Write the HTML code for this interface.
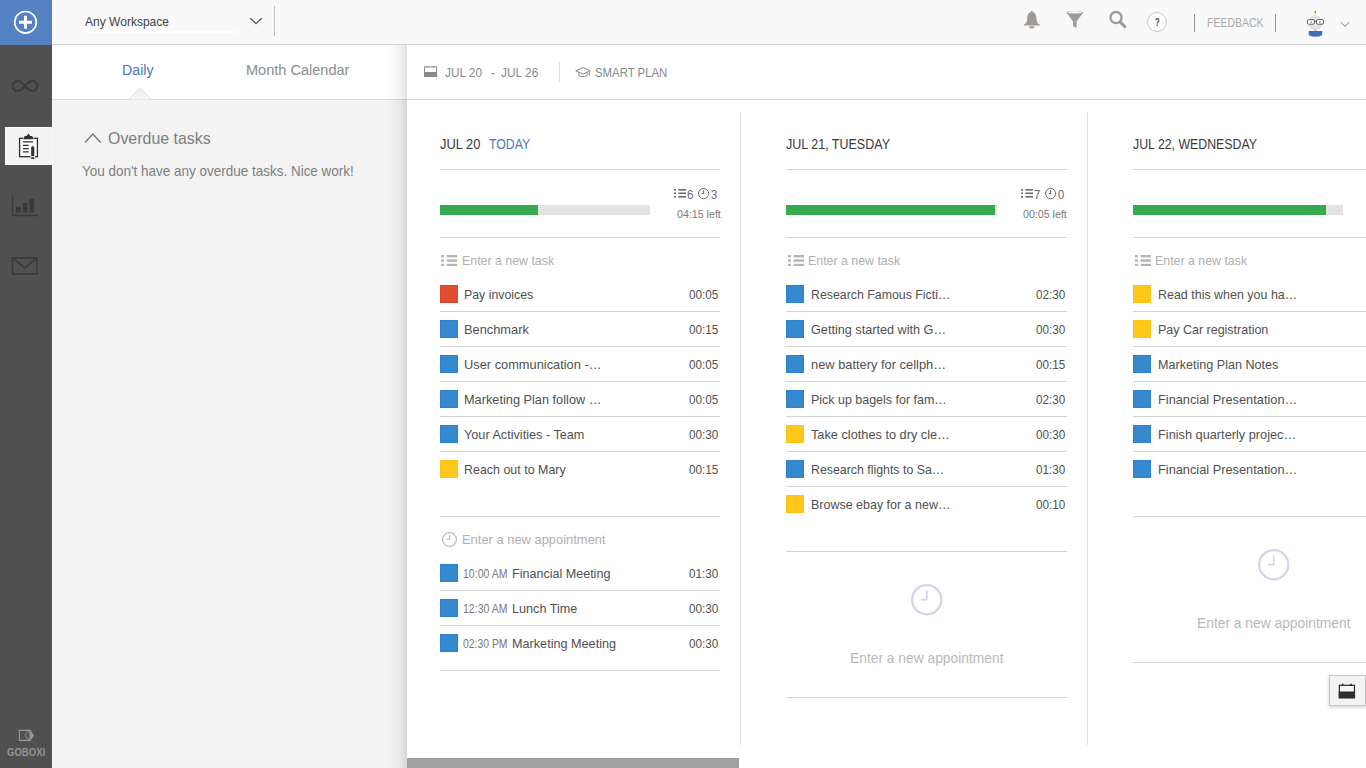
<!DOCTYPE html>
<html lang="en"><head><meta charset="utf-8"><title>Goboxi - Daily</title>
<style>
html,body{margin:0;padding:0}
body{width:1366px;height:768px;overflow:hidden;position:relative;background:#f3f3f3;font-family:"Liberation Sans",sans-serif}
.r{position:absolute;display:block}
.t{position:absolute;display:inline-block;white-space:nowrap;line-height:1;transform-origin:0 0}
</style></head>
<body>
<div class="r" style="left:0px;top:0px;width:1366px;height:768px;background:#f3f3f3;"></div>
<div class="r" style="left:52px;top:45px;width:355px;height:54px;background:#fff;"></div>
<div class="r" style="left:52px;top:99px;width:355px;height:1px;background:#dcdcdc;"></div>
<div class="r" style="left:384px;top:45px;width:23px;height:723px;background:linear-gradient(to right,rgba(0,0,0,0),rgba(0,0,0,.012) 30%,rgba(0,0,0,.04) 60%,rgba(0,0,0,.075) 82%,rgba(0,0,0,.125) 100%);"></div>
<div class="r" style="left:407px;top:45px;width:959px;height:723px;background:#fff;"></div>
<div class="r" style="left:407px;top:99px;width:959px;height:1px;background:#d8d8d8;"></div>
<div class="r" style="left:0px;top:0px;width:1366px;height:44px;background:#f9f9f9;"></div>
<div class="r" style="left:0px;top:44px;width:1366px;height:1px;background:#d2d2d2;"></div>
<div class="r" style="left:0px;top:0px;width:52px;height:45px;background:#5580c2;"></div>
<div class="r" style="left:0px;top:45px;width:52px;height:723px;background:#505050;"></div>
<div class="r" style="left:5px;top:127px;width:47px;height:38px;background:#f3f3f3;box-sizing:border-box;border:1px solid #fcfcfc;border-right:0;"></div>
<svg class="r" style="left:13px;top:10px" width="25" height="25" viewBox="0 0 25 25"><circle cx="12.5" cy="12.3" r="10.800" fill="none" stroke="#fff" stroke-width="1.600"/><path d="M12.5 5.8v13M6 12.3h13" stroke="#fff" stroke-width="3" fill="none"/></svg>
<span class="t " style="left:85.00px;top:15px;font-size:13.5px;color:#444;transform:scaleX(0.8908);">Any Workspace</span>
<div class="r" style="left:85px;top:30.5px;width:152px;height:2.3px;background:#fff;"></div>
<svg class="r" style="left:248px;top:15px" width="16" height="12" viewBox="0 0 16 12"><path d="M2.3 3.2L8 8.7L13.7 3.2" fill="none" stroke="#555" stroke-width="1.3"/></svg>
<div class="r" style="left:274px;top:6px;width:1px;height:30px;background:#bdbdbd;"></div>
<svg class="r" style="left:1022px;top:9px" width="20" height="21" viewBox="0 0 20 21"><circle cx="9.800" cy="2.900" r="1.100" fill="#9e9a98"/><path d="M9.800 3.100C6.600 3.100 5.400 5.900 5.200 9.200C5 12.500 4.400 14.300 1.900 15.600V16.500H17.700V15.600C15.200 14.300 14.600 12.500 14.400 9.200C14.200 5.900 13 3.100 9.800 3.100z" fill="#9e9a98"/><path d="M7.100 17.200h5.400a2.700 2.400 0 0 1-5.400 0z" fill="#9e9a98"/></svg>
<svg class="r" style="left:1065px;top:9px" width="20" height="21" viewBox="0 0 20 21"><path d="M1.500 3.600C1.500 1.500 18.200 1.500 18.200 3.600L11.600 12.600V18.700L8.100 17.200V12.600z" fill="#9e9a98"/><ellipse cx="9.850" cy="3.300" rx="7.300" ry="1.250" fill="#f6f6f6"/></svg>
<svg class="r" style="left:1106px;top:9px" width="22" height="21" viewBox="0 0 22 21"><circle cx="10" cy="8.600" r="5.600" fill="none" stroke="#9e9a98" stroke-width="2.300"/><path d="M14.300 13.100l4.500 4.500" stroke="#9e9a98" stroke-width="3" stroke-linecap="round"/></svg>
<div class="r" style="left:1147px;top:12px;width:18px;height:18px;border:1px solid #c8c8c8;border-radius:50%;background:#fff"></div>
<span class="t " style="left:1154.60px;top:17px;font-size:11px;color:#444;transform:scaleX(0.6855);font-weight:bold;">?</span>
<div class="r" style="left:1194px;top:14px;width:1px;height:18px;background:#999;"></div>
<span class="t " style="left:1207.00px;top:16px;font-size:13px;color:#aaa;transform:scaleX(0.8063);">FEEDBACK</span>
<div class="r" style="left:1275px;top:14px;width:1px;height:18px;background:#999;"></div>
<svg class="r" style="left:1304px;top:10px" width="24" height="28" viewBox="0 0 24 28">
<rect x="10.600" y=".9" width="1.400" height="2.400" rx=".6" fill="#e4483c"/>
<path d="M10.500 3.300h1.600l1.600 2.700H9.400z" fill="#f3efc4"/>
<ellipse cx="11.300" cy="12.700" rx="7.300" ry="7.100" fill="#e7e7e7"/>
<path d="M4.800 16q6.500 2.400 13 0M5.600 18q5.700 2 11.400 0M6 7.800q5.300-1.500 10.600 0" fill="none" stroke="#dcdcdc" stroke-width=".8"/>
<rect x="3.400" y="9.600" width="7" height="4.600" rx="1.300" fill="#fff" stroke="#5a5a5a" stroke-width="1"/>
<rect x="12.500" y="9.600" width="7" height="4.600" rx="1.300" fill="#fff" stroke="#5a5a5a" stroke-width="1"/>
<path d="M10.400 11.300h2.100" stroke="#5a5a5a" stroke-width="1"/>
<circle cx="7.200" cy="12.100" r=".8" fill="#777"/><circle cx="15.800" cy="12.100" r=".8" fill="#777"/>
<rect x="9.900" y="19.600" width="2.900" height="1.700" fill="#c4c4c4"/>
<path d="M4.700 21.100h13.500v4.200q-6.700 3-13.500 0z" fill="#3f74c4"/>
<path d="M5.300 21.600l6.100 3.300 6.100-3.300" fill="none" stroke="#3566ae" stroke-width=".7"/>
</svg>
<svg class="r" style="left:1339px;top:19.500px" width="12" height="9" viewBox="0 0 12 9"><path d="M1.800 2.200L6 6.300L10.200 2.200" fill="none" stroke="#777" stroke-width="1"/></svg>
<svg class="r" style="left:8.500px;top:78px" width="32" height="16" viewBox="0 0 32 16"><path d="M16 8c-2.600-3.200-4.500-5-7.300-5a5 5 0 0 0 0 10c2.800 0 4.700-1.800 7.300-5s4.500-5 7.300-5a5 5 0 0 1 0 10c-2.800 0-4.700-1.800-7.300-5z" fill="none" stroke="#393939" stroke-width="2"/></svg>
<svg class="r" style="left:17px;top:132px" width="23" height="28" viewBox="0 0 23 28">
<rect x="2.600" y="6.300" width="17.800" height="18.400" fill="#fff" stroke="#2f2f2f" stroke-width="1.300"/>
<path d="M6.200 7.200L7.600 4.100h1.900l1.900-2.500l1.900 2.500h1.900l1.400 3.100z" fill="#2f2f2f" stroke="#fff" stroke-width=".9" paint-order="stroke"/>
<path d="M6 9.900h10M6 13.400h5.700M6 16.600h5.700M6 19.900h5.700" stroke="#2f2f2f" stroke-width="1.300"/>
<rect x="13.500" y="12.600" width="4.500" height="13" fill="#fff"/>
<path d="M14.200 15l1.550-2.100l1.550 2.100z" fill="#8a8a8a"/>
<rect x="14.200" y="15" width="3.100" height="9.200" fill="#2f2f2f"/>
<rect x="14.200" y="25.300" width="3.100" height="1.700" fill="#2f2f2f"/>
</svg>
<svg class="r" style="left:11px;top:195px" width="28" height="22" viewBox="0 0 28 22"><path d="M1.500 .5v20h25.500" fill="none" stroke="#393939" stroke-width="1.400"/><rect x="5" y="11.500" width="4.600" height="6" fill="#393939"/><rect x="11.800" y="8" width="4.600" height="9.500" fill="#393939"/><rect x="18.600" y="4" width="4.600" height="13.500" fill="#393939"/></svg>
<svg class="r" style="left:11px;top:256px" width="28" height="20" viewBox="0 0 28 20"><rect x="1.500" y="1.800" width="24.500" height="16.200" fill="none" stroke="#393939" stroke-width="1.600"/><path d="M2 2.300l11.800 9.500L25.500 2.300" fill="none" stroke="#393939" stroke-width="1.600"/></svg>
<svg class="r" style="left:18px;top:729px" width="17" height="13" viewBox="0 0 17 13"><path d="M1.400 1.400h10.600v10H1.400z" fill="none" stroke="#999" stroke-width="1.100"/><path d="M12 1.400L6.700 6.400 12 11.400" fill="none" stroke="#999" stroke-width="1"/><path d="M12.300 1L16.100 6.400L12.300 11.800z" fill="#999"/></svg>
<div class="r" style="left:52px;top:100px;width:1px;height:668px;background:#fafafa;"></div>
<span class="t " style="left:6.80px;top:748px;font-size:10px;color:#939393;transform:scaleX(0.9550);font-weight:bold;">GOBOXI</span>
<span class="t " style="left:122.00px;top:62px;font-size:15.5px;color:#4a78ba;transform:scaleX(0.9163);">Daily</span>
<span class="t " style="left:245.60px;top:62px;font-size:15.5px;color:#8c8c8c;transform:scaleX(0.9376);">Month Calendar</span>
<svg class="r" style="left:126px;top:86px" width="28" height="14" viewBox="0 0 28 14"><path d="M2.500 13.500L14 2.300L25.500 13.500z" fill="#f3f3f3"/><path d="M2.500 13.500L14 2.300L25.500 13.500" fill="none" stroke="#dcdcdc" stroke-width="1"/></svg>
<svg class="r" style="left:83px;top:131px" width="20" height="14" viewBox="0 0 20 14"><path d="M2 11.500L9.800 3L17.600 11.500" fill="none" stroke="#777" stroke-width="1.400"/></svg>
<span class="t " style="left:107.60px;top:130px;font-size:16.5px;color:#7e7e7e;transform:scaleX(0.9657);">Overdue tasks</span>
<span class="t " style="left:82.40px;top:164px;font-size:14.5px;color:#7e7e7e;transform:scaleX(0.9296);">You don&#x27;t have any overdue tasks. Nice work!</span>
<svg class="r" style="left:423px;top:65px" width="16" height="13" viewBox="0 0 16 13"><rect x="1.500" y="1.900" width="12.100" height="9.500" fill="#fff" stroke="#8a8a8a" stroke-width="1"/><rect x="1" y="7" width="13.100" height="4.900" fill="#8a8a8a"/><rect x="3.400" y=".9" width="1.300" height="1.800" fill="#8a8a8a"/><rect x="10.300" y=".9" width="1.300" height="1.800" fill="#8a8a8a"/></svg>
<span class="t " style="left:445.30px;top:66px;font-size:13.5px;color:#888;transform:scaleX(0.8756);">JUL 20</span>
<span class="t " style="left:491.40px;top:66px;font-size:13.5px;color:#888;transform:scaleX(0.7960);">-</span>
<span class="t " style="left:501.20px;top:66px;font-size:13.5px;color:#888;transform:scaleX(0.8827);">JUL 26</span>
<div class="r" style="left:559px;top:62px;width:1px;height:20px;background:#ddd;"></div>
<svg class="r" style="left:574px;top:66px" width="18" height="13" viewBox="0 0 18 13"><path d="M1.800 4.800L9 1.500l7.200 3.300L9 8.100z" fill="none" stroke="#888" stroke-width="1"/><path d="M4.800 6.500v3c1.400 1.500 7 1.500 8.400 0v-3" fill="none" stroke="#888" stroke-width="1"/><path d="M15.300 5.200v4.600" stroke="#888" stroke-width="1"/></svg>
<span class="t " style="left:594.50px;top:66px;font-size:13.5px;color:#888;transform:scaleX(0.8427);">SMART PLAN</span>
<span class="t " style="left:440.00px;top:136px;font-size:15.5px;color:#3a3a3a;transform:scaleX(0.8307);">JUL 20</span>
<span class="t " style="left:488.70px;top:136px;font-size:15.5px;color:#4a78ba;transform:scaleX(0.7942);">TODAY</span>
<div class="r" style="left:440px;top:169px;width:280px;height:1px;background:#d4d4d4;"></div>
<div class="r" style="left:440px;top:205px;width:210px;height:10px;background:#e3e3e3;"></div>
<div class="r" style="left:440px;top:205px;width:98px;height:10px;background:#35aa4e;"></div>
<div class="r" style="left:440px;top:237px;width:280px;height:1px;background:#d4d4d4;"></div>
<svg class="r" style="left:673.80px;top:189.40px" width="12" height="8.6" viewBox="0 0 12 8.6"><rect x="0" y="0.00" width="2" height="1.6" fill="#6a6a6a"/><rect x="4.4" y="0.00" width="7.60" height="1.6" fill="#6a6a6a"/><rect x="0" y="3.50" width="2" height="1.6" fill="#6a6a6a"/><rect x="4.4" y="3.50" width="7.60" height="1.6" fill="#6a6a6a"/><rect x="0" y="7.00" width="2" height="1.6" fill="#6a6a6a"/><rect x="4.4" y="7.00" width="7.60" height="1.6" fill="#6a6a6a"/></svg>
<span class="t " style="left:687.30px;top:189px;font-size:12.5px;color:#6a6a6a;transform:scaleX(0.9225);">6</span>
<svg class="r" style="left:696.80px;top:187.40px" width="13.20" height="13.20" viewBox="0 0 13.20 13.20"><circle cx="6.60" cy="6.60" r="5.10" fill="none" stroke="#6a6a6a" stroke-width="1"/><path d="M6.60 3.24V7.10M7.10 6.60H4.58" fill="none" stroke="#6a6a6a" stroke-width="1"/></svg>
<span class="t " style="left:711.00px;top:189px;font-size:12.5px;color:#6a6a6a;transform:scaleX(0.8937);">3</span>
<span class="t " style="left:677.00px;top:209px;font-size:11.5px;color:#7a7a7a;transform:scaleX(0.9256);">04:15 left</span>
<svg class="r" style="left:441.20px;top:255.00px" width="16" height="11.2" viewBox="0 0 16 11.2"><rect x="0" y="0.00" width="2.9" height="2.4" fill="#b4b4b4"/><rect x="5.7" y="0.00" width="10.30" height="2.4" fill="#b4b4b4"/><rect x="0" y="4.40" width="2.9" height="2.4" fill="#b4b4b4"/><rect x="5.7" y="4.40" width="10.30" height="2.4" fill="#b4b4b4"/><rect x="0" y="8.80" width="2.9" height="2.4" fill="#b4b4b4"/><rect x="5.7" y="8.80" width="10.30" height="2.4" fill="#b4b4b4"/></svg>
<span class="t " style="left:461.50px;top:254px;font-size:13.5px;color:#b0b0b0;transform:scaleX(0.9161);">Enter a new task</span>
<div class="r" style="left:440px;top:285px;width:16px;height:16px;background:#e04e33;border:1px solid #dc4529"></div>
<span class="t " style="left:464.20px;top:288px;font-size:13.5px;color:#505050;transform:scaleX(0.9142);">Pay invoices</span>
<span class="t " style="left:688.80px;top:288px;font-size:13.5px;color:#505050;transform:scaleX(0.8664);">00:05</span>
<div class="r" style="left:440px;top:311px;width:280px;height:1px;background:#d4d4d4;"></div>
<div class="r" style="left:440px;top:320px;width:16px;height:16px;background:#3789cf;border:1px solid #2f81cc"></div>
<span class="t " style="left:464.20px;top:323px;font-size:13.5px;color:#505050;transform:scaleX(0.9491);">Benchmark</span>
<span class="t " style="left:688.80px;top:323px;font-size:13.5px;color:#505050;transform:scaleX(0.8664);">00:15</span>
<div class="r" style="left:440px;top:346px;width:280px;height:1px;background:#d4d4d4;"></div>
<div class="r" style="left:440px;top:355px;width:16px;height:16px;background:#3789cf;border:1px solid #2f81cc"></div>
<span class="t " style="left:464.20px;top:358px;font-size:13.5px;color:#505050;transform:scaleX(0.9497);">User communication -…</span>
<span class="t " style="left:688.80px;top:358px;font-size:13.5px;color:#505050;transform:scaleX(0.8664);">00:05</span>
<div class="r" style="left:440px;top:381px;width:280px;height:1px;background:#d4d4d4;"></div>
<div class="r" style="left:440px;top:390px;width:16px;height:16px;background:#3789cf;border:1px solid #2f81cc"></div>
<span class="t " style="left:464.20px;top:393px;font-size:13.5px;color:#505050;transform:scaleX(0.9444);">Marketing Plan follow …</span>
<span class="t " style="left:688.80px;top:393px;font-size:13.5px;color:#505050;transform:scaleX(0.8664);">00:05</span>
<div class="r" style="left:440px;top:416px;width:280px;height:1px;background:#d4d4d4;"></div>
<div class="r" style="left:440px;top:425px;width:16px;height:16px;background:#3789cf;border:1px solid #2f81cc"></div>
<span class="t " style="left:464.20px;top:428px;font-size:13.5px;color:#505050;transform:scaleX(0.9383);">Your Activities - Team</span>
<span class="t " style="left:688.80px;top:428px;font-size:13.5px;color:#505050;transform:scaleX(0.8664);">00:30</span>
<div class="r" style="left:440px;top:451px;width:280px;height:1px;background:#d4d4d4;"></div>
<div class="r" style="left:440px;top:460px;width:16px;height:16px;background:#fdc81a;border:1px solid #fdc30e"></div>
<span class="t " style="left:464.20px;top:463px;font-size:13.5px;color:#505050;transform:scaleX(0.9221);">Reach out to Mary</span>
<span class="t " style="left:688.80px;top:463px;font-size:13.5px;color:#505050;transform:scaleX(0.8664);">00:15</span>
<div class="r" style="left:440px;top:516px;width:280px;height:1px;background:#d4d4d4;"></div>
<svg class="r" style="left:440.70px;top:530.90px" width="17.00" height="17.00" viewBox="0 0 17.00 17.00"><circle cx="8.50" cy="8.50" r="6.90" fill="none" stroke="#bdb9b9" stroke-width="1.2"/><path d="M8.50 4.00V9.10M9.10 8.50H5.80" fill="none" stroke="#bdb9b9" stroke-width="1.2"/></svg>
<span class="t " style="left:461.70px;top:533px;font-size:13.5px;color:#b0b0b0;transform:scaleX(0.9566);">Enter a new appointment</span>
<div class="r" style="left:440px;top:564px;width:16px;height:16px;background:#3789cf;border:1px solid #2f81cc"></div>
<span class="t " style="left:463.10px;top:567px;font-size:13px;color:#787878;transform:scaleX(0.8102);">10:00 AM</span>
<span class="t " style="left:511.50px;top:567px;font-size:13.5px;color:#505050;transform:scaleX(0.9297);">Financial Meeting</span>
<span class="t " style="left:688.80px;top:567px;font-size:13.5px;color:#505050;transform:scaleX(0.8664);">01:30</span>
<div class="r" style="left:440px;top:590px;width:280px;height:1px;background:#d4d4d4;"></div>
<div class="r" style="left:440px;top:599px;width:16px;height:16px;background:#3789cf;border:1px solid #2f81cc"></div>
<span class="t " style="left:463.10px;top:602px;font-size:13px;color:#787878;transform:scaleX(0.8102);">12:30 AM</span>
<span class="t " style="left:511.50px;top:602px;font-size:13.5px;color:#505050;transform:scaleX(0.9370);">Lunch Time</span>
<span class="t " style="left:688.80px;top:602px;font-size:13.5px;color:#505050;transform:scaleX(0.8664);">00:30</span>
<div class="r" style="left:440px;top:625px;width:280px;height:1px;background:#d4d4d4;"></div>
<div class="r" style="left:440px;top:634px;width:16px;height:16px;background:#3789cf;border:1px solid #2f81cc"></div>
<span class="t " style="left:463.10px;top:637px;font-size:13px;color:#787878;transform:scaleX(0.7998);">02:30 PM</span>
<span class="t " style="left:511.50px;top:637px;font-size:13.5px;color:#505050;transform:scaleX(0.9366);">Marketing Meeting</span>
<span class="t " style="left:688.80px;top:637px;font-size:13.5px;color:#505050;transform:scaleX(0.8664);">00:30</span>
<div class="r" style="left:440px;top:670px;width:280px;height:1px;background:#d4d4d4;"></div>
<span class="t " style="left:786.00px;top:136px;font-size:15.5px;color:#3a3a3a;transform:scaleX(0.8065);">JUL 21, TUESDAY</span>
<div class="r" style="left:786px;top:169px;width:281px;height:1px;background:#d4d4d4;"></div>
<div class="r" style="left:786px;top:205px;width:211px;height:10px;background:#e3e3e3;"></div>
<div class="r" style="left:786px;top:205px;width:209px;height:10px;background:#35aa4e;"></div>
<div class="r" style="left:786px;top:237px;width:281px;height:1px;background:#d4d4d4;"></div>
<svg class="r" style="left:1020.60px;top:189.40px" width="12" height="8.6" viewBox="0 0 12 8.6"><rect x="0" y="0.00" width="2" height="1.6" fill="#6a6a6a"/><rect x="4.4" y="0.00" width="7.60" height="1.6" fill="#6a6a6a"/><rect x="0" y="3.50" width="2" height="1.6" fill="#6a6a6a"/><rect x="4.4" y="3.50" width="7.60" height="1.6" fill="#6a6a6a"/><rect x="0" y="7.00" width="2" height="1.6" fill="#6a6a6a"/><rect x="4.4" y="7.00" width="7.60" height="1.6" fill="#6a6a6a"/></svg>
<span class="t " style="left:1034.10px;top:189px;font-size:12.5px;color:#6a6a6a;transform:scaleX(0.9225);">7</span>
<svg class="r" style="left:1043.60px;top:187.40px" width="13.20" height="13.20" viewBox="0 0 13.20 13.20"><circle cx="6.60" cy="6.60" r="5.10" fill="none" stroke="#6a6a6a" stroke-width="1"/><path d="M6.60 3.24V7.10M7.10 6.60H4.58" fill="none" stroke="#6a6a6a" stroke-width="1"/></svg>
<span class="t " style="left:1057.80px;top:189px;font-size:12.5px;color:#6a6a6a;transform:scaleX(0.8937);">0</span>
<span class="t " style="left:1023.40px;top:209px;font-size:11.5px;color:#7a7a7a;transform:scaleX(0.9256);">00:05 left</span>
<svg class="r" style="left:788.00px;top:255.00px" width="16" height="11.2" viewBox="0 0 16 11.2"><rect x="0" y="0.00" width="2.9" height="2.4" fill="#b4b4b4"/><rect x="5.7" y="0.00" width="10.30" height="2.4" fill="#b4b4b4"/><rect x="0" y="4.40" width="2.9" height="2.4" fill="#b4b4b4"/><rect x="5.7" y="4.40" width="10.30" height="2.4" fill="#b4b4b4"/><rect x="0" y="8.80" width="2.9" height="2.4" fill="#b4b4b4"/><rect x="5.7" y="8.80" width="10.30" height="2.4" fill="#b4b4b4"/></svg>
<span class="t " style="left:808.30px;top:254px;font-size:13.5px;color:#b0b0b0;transform:scaleX(0.9161);">Enter a new task</span>
<div class="r" style="left:786px;top:285px;width:16px;height:16px;background:#3789cf;border:1px solid #2f81cc"></div>
<span class="t " style="left:811.24px;top:288px;font-size:13.5px;color:#505050;transform:scaleX(0.9145);">Research Famous Ficti…</span>
<span class="t " style="left:1035.60px;top:288px;font-size:13.5px;color:#505050;transform:scaleX(0.8664);">02:30</span>
<div class="r" style="left:786px;top:311px;width:281px;height:1px;background:#d4d4d4;"></div>
<div class="r" style="left:786px;top:320px;width:16px;height:16px;background:#3789cf;border:1px solid #2f81cc"></div>
<span class="t " style="left:811.24px;top:323px;font-size:13.5px;color:#505050;transform:scaleX(0.9376);">Getting started with G…</span>
<span class="t " style="left:1035.60px;top:323px;font-size:13.5px;color:#505050;transform:scaleX(0.8664);">00:30</span>
<div class="r" style="left:786px;top:346px;width:281px;height:1px;background:#d4d4d4;"></div>
<div class="r" style="left:786px;top:355px;width:16px;height:16px;background:#3789cf;border:1px solid #2f81cc"></div>
<span class="t " style="left:811.24px;top:358px;font-size:13.5px;color:#505050;transform:scaleX(0.9524);">new battery for cellph…</span>
<span class="t " style="left:1035.60px;top:358px;font-size:13.5px;color:#505050;transform:scaleX(0.8664);">00:15</span>
<div class="r" style="left:786px;top:381px;width:281px;height:1px;background:#d4d4d4;"></div>
<div class="r" style="left:786px;top:390px;width:16px;height:16px;background:#3789cf;border:1px solid #2f81cc"></div>
<span class="t " style="left:811.24px;top:393px;font-size:13.5px;color:#505050;transform:scaleX(0.9230);">Pick up bagels for fam…</span>
<span class="t " style="left:1035.60px;top:393px;font-size:13.5px;color:#505050;transform:scaleX(0.8664);">02:30</span>
<div class="r" style="left:786px;top:416px;width:281px;height:1px;background:#d4d4d4;"></div>
<div class="r" style="left:786px;top:425px;width:16px;height:16px;background:#fdc81a;border:1px solid #fdc30e"></div>
<span class="t " style="left:811.24px;top:428px;font-size:13.5px;color:#505050;transform:scaleX(0.9441);">Take clothes to dry cle…</span>
<span class="t " style="left:1035.60px;top:428px;font-size:13.5px;color:#505050;transform:scaleX(0.8664);">00:30</span>
<div class="r" style="left:786px;top:451px;width:281px;height:1px;background:#d4d4d4;"></div>
<div class="r" style="left:786px;top:460px;width:16px;height:16px;background:#3789cf;border:1px solid #2f81cc"></div>
<span class="t " style="left:811.24px;top:463px;font-size:13.5px;color:#505050;transform:scaleX(0.9146);">Research flights to Sa…</span>
<span class="t " style="left:1035.60px;top:463px;font-size:13.5px;color:#505050;transform:scaleX(0.8664);">01:30</span>
<div class="r" style="left:786px;top:486px;width:281px;height:1px;background:#d4d4d4;"></div>
<div class="r" style="left:786px;top:495px;width:16px;height:16px;background:#fdc81a;border:1px solid #fdc30e"></div>
<span class="t " style="left:811.24px;top:498px;font-size:13.5px;color:#505050;transform:scaleX(0.9242);">Browse ebay for a new…</span>
<span class="t " style="left:1035.60px;top:498px;font-size:13.5px;color:#505050;transform:scaleX(0.8664);">00:10</span>
<div class="r" style="left:786px;top:551px;width:281px;height:1px;background:#d4d4d4;"></div>
<svg class="r" style="left:909.80px;top:582.80px" width="33.40" height="33.40" viewBox="0 0 33.40 33.40"><circle cx="16.70" cy="16.70" r="14.60" fill="none" stroke="#ddd0e6" stroke-width="2.2"/><path d="M16.70 7.28V17.55M17.55 16.70H11.05" fill="none" stroke="#ddd0e6" stroke-width="1.7"/></svg>
<span class="t " style="left:850.30px;top:651px;font-size:14.5px;color:#b8b8b8;transform:scaleX(0.9520);">Enter a new appointment</span>
<div class="r" style="left:786px;top:697px;width:281px;height:1px;background:#d4d4d4;"></div>
<span class="t " style="left:1133.00px;top:136px;font-size:15.5px;color:#3a3a3a;transform:scaleX(0.7952);">JUL 22, WEDNESDAY</span>
<div class="r" style="left:1133px;top:169px;width:240px;height:1px;background:#d4d4d4;"></div>
<div class="r" style="left:1133px;top:205px;width:210px;height:10px;background:#e3e3e3;"></div>
<div class="r" style="left:1133px;top:205px;width:193px;height:10px;background:#35aa4e;"></div>
<div class="r" style="left:1133px;top:237px;width:240px;height:1px;background:#d4d4d4;"></div>
<svg class="r" style="left:1134.60px;top:255.00px" width="16" height="11.2" viewBox="0 0 16 11.2"><rect x="0" y="0.00" width="2.9" height="2.4" fill="#b4b4b4"/><rect x="5.7" y="0.00" width="10.30" height="2.4" fill="#b4b4b4"/><rect x="0" y="4.40" width="2.9" height="2.4" fill="#b4b4b4"/><rect x="5.7" y="4.40" width="10.30" height="2.4" fill="#b4b4b4"/><rect x="0" y="8.80" width="2.9" height="2.4" fill="#b4b4b4"/><rect x="5.7" y="8.80" width="10.30" height="2.4" fill="#b4b4b4"/></svg>
<span class="t " style="left:1154.90px;top:254px;font-size:13.5px;color:#b0b0b0;transform:scaleX(0.9161);">Enter a new task</span>
<div class="r" style="left:1133px;top:285px;width:16px;height:16px;background:#fdc81a;border:1px solid #fdc30e"></div>
<span class="t " style="left:1157.72px;top:288px;font-size:13.5px;color:#505050;transform:scaleX(0.9232);">Read this when you ha…</span>
<div class="r" style="left:1133px;top:311px;width:240px;height:1px;background:#d4d4d4;"></div>
<div class="r" style="left:1133px;top:320px;width:16px;height:16px;background:#fdc81a;border:1px solid #fdc30e"></div>
<span class="t " style="left:1157.72px;top:323px;font-size:13.5px;color:#505050;transform:scaleX(0.9246);">Pay Car registration</span>
<div class="r" style="left:1133px;top:346px;width:240px;height:1px;background:#d4d4d4;"></div>
<div class="r" style="left:1133px;top:355px;width:16px;height:16px;background:#3789cf;border:1px solid #2f81cc"></div>
<span class="t " style="left:1157.72px;top:358px;font-size:13.5px;color:#505050;transform:scaleX(0.9320);">Marketing Plan Notes</span>
<div class="r" style="left:1133px;top:381px;width:240px;height:1px;background:#d4d4d4;"></div>
<div class="r" style="left:1133px;top:390px;width:16px;height:16px;background:#3789cf;border:1px solid #2f81cc"></div>
<span class="t " style="left:1157.72px;top:393px;font-size:13.5px;color:#505050;transform:scaleX(0.9470);">Financial Presentation…</span>
<div class="r" style="left:1133px;top:416px;width:240px;height:1px;background:#d4d4d4;"></div>
<div class="r" style="left:1133px;top:425px;width:16px;height:16px;background:#3789cf;border:1px solid #2f81cc"></div>
<span class="t " style="left:1157.72px;top:428px;font-size:13.5px;color:#505050;transform:scaleX(0.9449);">Finish quarterly projec…</span>
<div class="r" style="left:1133px;top:451px;width:240px;height:1px;background:#d4d4d4;"></div>
<div class="r" style="left:1133px;top:460px;width:16px;height:16px;background:#3789cf;border:1px solid #2f81cc"></div>
<span class="t " style="left:1157.72px;top:463px;font-size:13.5px;color:#505050;transform:scaleX(0.9470);">Financial Presentation…</span>
<div class="r" style="left:1133px;top:516px;width:240px;height:1px;background:#d4d4d4;"></div>
<svg class="r" style="left:1256.80px;top:547.80px" width="33.40" height="33.40" viewBox="0 0 33.40 33.40"><circle cx="16.70" cy="16.70" r="14.60" fill="none" stroke="#ddd0e6" stroke-width="2.2"/><path d="M16.70 7.28V17.55M17.55 16.70H11.05" fill="none" stroke="#ddd0e6" stroke-width="1.7"/></svg>
<span class="t " style="left:1197.30px;top:616px;font-size:14.5px;color:#b8b8b8;transform:scaleX(0.9520);">Enter a new appointment</span>
<div class="r" style="left:1133px;top:662px;width:240px;height:1px;background:#d4d4d4;"></div>
<div class="r" style="left:740px;top:112px;width:1px;height:633px;background:#dedede;"></div>
<div class="r" style="left:1087px;top:112px;width:1px;height:633px;background:#dedede;"></div>
<div class="r" style="left:407px;top:758px;width:332px;height:10px;background:#a0a0a0;"></div>
<div class="r" style="left:1329px;top:675px;width:35px;height:29px;background:#f3f3f3;border:1px solid #c9c9c9;box-shadow:0 1px 3px rgba(0,0,0,.22)"></div>
<svg class="r" style="left:1338px;top:682.500px" width="18" height="16" viewBox="0 0 18 16"><rect x="1.350" y="2.300" width="15.100" height="12.400" fill="#f6f6f6" stroke="#2a2a2a" stroke-width="1.200"/><rect x=".75" y="8.500" width="16.300" height="6.800" fill="#2e2e2e"/><rect x="4" y=".7" width="1.500" height="2.200" fill="#2a2a2a"/><rect x="12.300" y=".7" width="1.500" height="2.200" fill="#2a2a2a"/></svg>
</body></html>
